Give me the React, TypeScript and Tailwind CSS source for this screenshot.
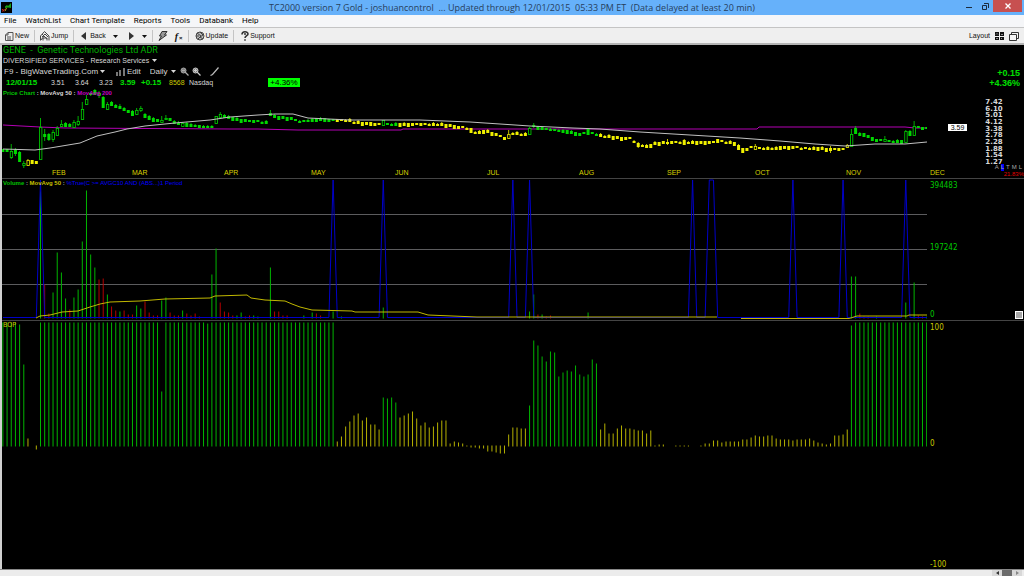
import type { ReactNode } from 'react';

const STEP = 4.18;
const barX = (i: number) => 0.88 + i * STEP;

const GREEN = '#00b400';
const YELLOW = '#b4b000';

// [high, body top, body bottom, low], 1 in fifth place for a hollow candle
type Candle = [number, number, number, number, number?];

const OPENING: Candle[] = [
  [61, 61, 63, 63], [61, 61, 63, 64], [56, 63, 69, 71, 1], [60, 62, 65, 68], [63, 64, 73, 74],
  [73, 75, 77, 82, 1], [71, 72, 77, 78, 1], [72, 72, 75, 75], [73, 73, 75, 75], [30, 39, 71, 71, 1],
  [41, 46, 48, 53], [45, 46, 51, 53], [42, 44, 51, 54, 1], [38, 40, 47, 47, 1], [32, 36, 38, 39, 1],
  [34, 35, 38, 39], [35, 36, 38, 38], [32, 34, 39, 40, 1], [28, 33, 36, 38, 1], [14, 21, 31, 31, 1],
  [7, 11, 16, 17, 1], [4, 5, 6, 8], [1, 2, 6, 7], [3, 5, 7, 10, 1], [8, 9, 19, 20],
  [14, 16, 21, 22, 1], [13, 14, 17, 17], [16, 17, 19, 20], [16, 18, 20, 21], [19, 20, 22, 23],
  [22, 22, 24, 24], [22, 23, 27, 27], [20, 22, 26, 27, 1], [18, 20, 22, 24, 1], [25, 26, 29, 29],
  [27, 28, 31, 31], [29, 30, 33, 33], [31, 31, 33, 34], [28, 32, 34, 34, 1], [27, 30, 31, 32, 1],
  [30, 30, 32, 33], [32, 33, 35, 35], [33, 35, 36, 37], [34, 35, 38, 38, 1], [34, 35, 38, 39],
  [35, 36, 38, 38], [36, 37, 38, 39], [37, 37, 39, 40], [37, 38, 39, 39], [37, 38, 39, 39],
  [37, 38, 39, 39], [28, 28, 35, 36, 1], [24, 26, 29, 29, 1], [26, 27, 29, 30],
];

// The quiet stretches follow this path, [bar, y]
const TREND: [number, number][] = [
  [54, 29], [57, 32], [60, 33], [63, 34], [65, 28], [69, 30], [71, 33], [75, 31], [80, 32], [83, 32],
  [84, 34], [90, 36], [105, 36], [108, 38], [111, 40], [113, 44], [116, 43], [118, 46], [120, 50],
  [122, 45], [125, 46], [127, 38], [129, 40], [135, 43], [138, 46], [140, 43], [142, 46], [146, 49],
  [150, 50], [152, 56], [154, 58], [156, 55], [158, 54], [170, 54], [171, 52], [175, 55], [177, 62],
  [179, 59], [183, 60], [187, 59], [195, 60], [198, 61], [201, 61], [202, 58], [205, 46], [206, 46],
  [208, 50], [209, 52], [215, 53], [219, 39], [221, 40],
];

const SPECIAL: Record<number, Candle> = {
  64: [22, 25, 27, 27], 91: [32, 32, 37, 38, 1], 112: [40, 40, 44, 45], 121: [42, 46, 50, 51, 1],
  126: [39, 40, 46, 46, 1], 127: [35, 37, 38, 40], 140: [41, 41, 46, 46], 152: [54, 55, 58, 60],
  159: [51, 54, 55, 57], 163: [51, 52, 56, 56], 171: [51, 51, 54, 54], 176: [56, 57, 61, 62],
  177: [60, 60, 64, 65], 180: [56, 58, 61, 62, 1], 198: [58, 60, 62, 65], 202: [56, 57, 59, 60, 1],
  203: [41, 46, 58, 58, 1], 204: [38, 40, 45, 46], 211: [48, 51, 53, 53, 1], 216: [42, 43, 54, 54, 1],
  217: [42, 43, 47, 47], 218: [33, 38, 47, 47, 1],
};

const SHAPES: Candle[] = [[-1, -1, 1, 1], [-2, -1, 1, 2], [-1, -1, 0, 1], [-1, -1, 2, 2], [-1, 0, 1, 2]];

function trendAt(i: number) {
  const k = TREND.findIndex(([bar]) => bar >= i);
  const [b, yb] = TREND[k];
  if (b === i) return yb;
  const [a, ya] = TREND[k - 1];
  return ya + ((yb - ya) * (i - a)) / (b - a);
}

const CANDLES: Candle[] = Array.from({ length: 222 }, (_, i) => {
  if (i < OPENING.length) return OPENING[i];
  if (SPECIAL[i]) return SPECIAL[i];
  const y = Math.round(trendAt(i));
  const s = SHAPES[(i * 7 + (i >> 2)) % SHAPES.length];
  return [y + s[0], y + s[1], y + s[2], y + s[3]];
});

const isYellow = (i: number) =>
  (i > 5 && i < 9) || (i > 79 && i < 91) || (i > 94 && i < 126) || (i > 142 && i < 203);

const MA50 =
  '1,61 33,62 48,60 78,55 95,48 113,44 125,41 143,38 173,35 208,32 228,29 256,27 273,26 291,26 306,30 348,32 418,32 468,34 498,36 528,38 571,40 598,41 638,44 688,47 738,50 778,53 813,56 843,58 873,56 903,56 925,54';
const MA200 = '1,37 38,39 63,40 228,41 256,41 296,42 399,42 401,41 755,41 757,39 903,39 913,40 925,40';

// Volume: positive bars are up days, negative bars are down days
const VOLUME: Record<number, number> = {
  9: 127, 10: -34, 11: -5, 12: 26, 13: 66, 14: 46, 15: 20, 16: -9, 17: 21, 18: 29, 19: 77, 20: 128,
  21: 64, 22: 51, 23: -39, 24: -40, 25: 24, 26: -12, 27: -8, 28: 7, 29: -8, 30: -4, 31: -4, 32: 13,
  33: 10, 34: -17, 35: -6, 36: -3, 37: -3, 38: 18, 39: 21, 40: -6, 41: -3, 42: -3, 43: 8, 44: -5,
  45: -3, 46: -5, 47: -2, 50: 44, 51: 70, 52: -16, 53: -7, 54: -6, 55: -3, 56: 3, 57: 6, 58: -2,
  59: -3, 60: 3, 61: 2, 64: 51, 65: -7, 66: -7, 67: -3, 68: -3, 72: 3, 74: 6, 75: -5, 76: -3,
  79: 7, 81: 2, 91: 11, 126: 7, 127: 24, 128: -4, 129: 4, 130: -2, 131: -3, 140: 6, 203: 42,
  204: 42, 205: -5, 206: -2, 207: -2, 209: 2, 216: 16, 218: 36, 219: -3, 220: -2, 221: 2,
};
const SIGNALS = [[9, 9], [79, 79], [91, 91], [122, 122], [126, 126], [165, 165], [169, 170], [189, 189], [201, 201], [216, 216]];
const SIGNAL_LINE =
  `1,137.5 ` +
  SIGNALS.map(([a, b]) => `${barX(a - 1)},137.5 ${barX(a)},0 ${barX(b)},0 ${barX(b + 1)},137.5`).join(' ') +
  ` 925,137.5`;
const VOLUME_MA =
  '34,138 38,136 48,135 60,132 76,131 88,127 98,124 108,122 138,121 163,119 208,118 213,116 245,115 249,118 263,120 283,121 290,124 298,127 310,130 350,131 353,132 416,132 426,135 475,137 715,137';
const VOLUME_MA_LATE = '739,138.500 847,138.500 855,136 905,136 907,135 925,135';

const full = (n: number) => Array<number>(n).fill(124);
const BOP: number[] = [
  ...full(4), 122, 82, 8, 0, -4, ...full(29), 55, ...full(10), 123, ...full(30),
  5, 10, 20, 25, 31, 33, 26, 29, 22, 22, 17, 49, 48, 49, 44, 29, 31, 33, 35, 28, 21, 24, 19, 20, 24, 26, 26,
  3, 5, 4, 3, 1, -2, -2, -3, -3, -6, -6, -7, -8, -8, 12, 19, 19, 18, 18,
  41, 106, 101, 90, 85, 95, 94, 70, 74, 76, 75, 81, 72, 70, 72, 87, 83,
  17, 23, 13, 13, 18, 21, 18, 18, 17, 16, 16, 13, 16, 1, 2, 2, 0, 0, 1, 1, 1, 1, 0, 0,
  1, 3, 3, 6, 6, 4, 5, 5, 5, 5, 7, 7, 9, 11, 10, 10, 11, 11, 8, 7, 7, 7, 6, 7, 7, 7, 8, 6, 4, 3, 2, 3,
  11, 11, 12, 17, 121, ...full(18),
];

// Each month takes the share of the width between its label and the next
const MONTHS: [string, number][] = [
  ['', 50], ['FEB', 80], ['MAR', 92], ['APR', 87], ['MAY', 84], ['JUN', 92], ['JUL', 92],
  ['AUG', 88], ['SEP', 88], ['OCT', 91], ['NOV', 84], ['DEC', 94],
];

const PRICES = ['7.42', '6.10', '5.01', '4.12', '3.38', '2.78', '2.28', '1.88', '1.54', '1.27'];

function Caret() {
  return (
    <svg viewBox="0 0 5 3" className="h-[3px] w-[5px] shrink-0" fill="currentColor">
      <path d="M0 0h5L2.500 3z" />
    </svg>
  );
}

function ToolButton({ children, label }: { children: ReactNode; label?: string }) {
  return (
    <button aria-label={label} className="flex h-full items-center gap-px whitespace-nowrap">
      {children}
    </button>
  );
}

function Divider() {
  return <div className="h-3 w-px bg-[#c4c4c4]" />;
}

function TitleBar() {
  return (
    <header className="flex h-[15px] items-start bg-[#66b1fa] text-[#26405c]">
      <svg viewBox="0 0 11 11" className="mt-[2px] ml-px h-[11px] w-[11px]">
        <rect width="11" height="11" fill="#000" />
        <path d="M1 7l2 2.500M1.500 9.500L3.500 7" stroke="#d02020" fill="none" />
        <path d="M4 6V4.500L6 3l1 1 3-3v5L7 5.500z" fill="#18a018" />
        <path d="M4 9l1.500-3" stroke="#c8a020" fill="none" />
      </svg>
      <h1 className="flex-1 pl-[51px] text-center font-['Open_Sans',sans-serif] text-[9px] leading-[15px] whitespace-pre">
        TC2000 version 7 Gold - joshuancontrol  ... Updated through 12/01/2015  05:33 PM ET  (Data delayed at least 20 min)
      </h1>
      <button aria-label="Minimize" className="flex h-3 w-4 items-center justify-center">
        <svg viewBox="0 0 6 6" className="h-[6px] w-[6px]"><path d="M0 4h6v1H0z" fill="#1b2b3d" /></svg>
      </button>
      <button aria-label="Restore" className="flex h-3 w-4 items-center justify-center">
        <svg viewBox="0 0 7 7" className="h-[7px] w-[7px]" fill="none" stroke="#1b2b3d">
          <path d="M.5 2.500h4v4h-4zM2 .5h4.500V5" />
        </svg>
      </button>
      <button aria-label="Close" className="mr-[2px] flex h-3 w-[29px] items-center justify-center bg-[#c75050]">
        <svg viewBox="0 0 6 6" className="h-[6px] w-[6px]" stroke="#fff" strokeWidth="1.300"><path d="M.5.5l5 5M5.500.5l-5 5" /></svg>
      </button>
    </header>
  );
}

function MenuBar() {
  const items = ['File', 'WatchList', 'Chart Template', 'Reports', 'Tools', 'Databank', 'Help'];
  return (
    <nav className="flex h-3 items-center gap-[9px] bg-[#f5f6f8] pl-1 font-['Roboto',sans-serif] text-[8px] leading-3 text-black">
      {items.map((item) => (
        <button key={item}>{item}</button>
      ))}
    </nav>
  );
}

function Toolbar() {
  return (
    <div className="flex h-[18px] items-center border-t border-b-2 border-[#c4c4c4] border-b-[#b4b4b4] bg-[#efefef] pt-px pr-[5px] pl-[5px] text-[7px] text-[#111]">
      <div className="flex h-full items-center gap-[5px]">
        <ToolButton>
          <svg viewBox="0 0 9 9" className="h-[9px] w-[9px]" fill="none" stroke="#555">
            <path d="M3 .5h5v8H.5V3zM3 .5V3H.5M2 5h4M2 7h4" />
          </svg>
          New
        </ToolButton>
        <Divider />
        <ToolButton>
          <svg viewBox="0 0 10 10" className="h-[10px] w-[10px]" fill="none" stroke="#444">
            <path d="M.5 9.500V5l4-4.500L9 5v4.500M2 6l3-3 3 3M3 9.500V7h4v2.500M2 3l5 5M1 9l3-4" />
          </svg>
          Jump
        </ToolButton>
        <Divider />
        <div className="flex items-center gap-[11px] pl-[2px]">
          <ToolButton>
            <svg viewBox="0 0 5 8" className="mr-[3px] h-2 w-[5px]" fill="#333"><path d="M5 0v8L0 4z" /></svg>
            <span className="pr-[6px]">Back</span>
            <Caret />
          </ToolButton>
          <ToolButton label="Forward">
            <svg viewBox="0 0 5 8" className="mr-[7px] h-2 w-[5px]" fill="#333"><path d="M0 0v8l5-4z" /></svg>
            <Caret />
          </ToolButton>
        </div>
        <Divider />
        <ToolButton label="Alerts">
          <svg viewBox="0 0 10 10" className="mr-[2px] h-[10px] w-[10px]" fill="#999" stroke="#333">
            <path d="M4 .5h5L6.500 4h2L1 9.500 3.500 5h-2z" />
          </svg>
        </ToolButton>
        <ToolButton label="Formula">
          <span className="font-['Liberation_Serif',serif] text-[10px] font-bold italic">f</span>
          <span className="pt-1 text-[6px] font-bold">×</span>
        </ToolButton>
        <Divider />
        <ToolButton>
          <svg viewBox="0 0 10 10" className="ml-px h-[10px] w-[10px]" fill="#bbb" stroke="#444">
            <circle cx="5" cy="5" r="4" />
            <path d="M2 2l4 3-3 3M5 1l3 3-3 2 3 2M1 5h3" fill="none" />
          </svg>
          Update
        </ToolButton>
        <Divider />
        <ToolButton>
          <svg viewBox="0 0 8 10" className="ml-[2px] h-[10px] w-2" fill="none" stroke="#333" strokeWidth="1.600">
            <path d="M1 3.500C1 0 7 0 7 3c0 1.500-3 2-3 4M4 8.200v1.500" />
            <path d="M3 3h2" />
          </svg>
          Support
        </ToolButton>
      </div>
      <div className="ml-auto flex items-center gap-[5px]">
        <span>Layout</span>
        <button aria-label="Tile charts">
          <svg viewBox="0 0 9 8" className="h-2 w-[9px]" fill="#111">
            <path d="M0 0h4v4H0zM5 0h4v4H5zM0 5h4v3H0zM5 5h4v3H5z" />
            <path d="M1 2.500l1-1 1 1M6 2l1 1 1-1M1 6.500h2M6 7l1-1" stroke="#ddd" strokeWidth=".6" fill="none" />
          </svg>
        </button>
        <button aria-label="Cascade charts">
          <svg viewBox="0 0 10 9" className="h-[9px] w-[10px]" fill="#f4f4f4" stroke="#333">
            <path d="M2.500.5h7v6h-7z" />
            <path d="M.5 2.500h7v6h-7z" />
          </svg>
        </button>
      </div>
    </div>
  );
}

function Candles() {
  return (
    <g strokeWidth="1">
      {CANDLES.map(([hi, top, bottom, low, hollow], i) => {
        const x = barX(i);
        const color = isYellow(i) ? '#f0f000' : '#00d800';
        return (
          <g key={i} stroke={color}>
            <path d={`M${x} ${hi}V${top}M${x} ${bottom}V${low}`} strokeOpacity=".8" />
            {hollow ? (
              <rect x={x - 1} y={top + 0.5} width="2.400" height={bottom - top} fill="#000" strokeWidth=".8" />
            ) : (
              <rect x={x - 1.5} y={top} width="3" height={bottom - top + 1} fill={color} stroke="none" />
            )}
          </g>
        );
      })}
    </g>
  );
}

function PricePane() {
  return (
    <section className="text-[#d8d8d8]">
      <div className="flex">
        <div className="min-w-0 flex-1">
          <h2 className="h-[10px] pl-px font-['Roboto',sans-serif] text-[9px] leading-[11px] text-[#00b000]">GENE&nbsp; -&nbsp; Genetic Technologies Ltd ADR</h2>
          <div className="flex h-[11px] items-center gap-[3px] pl-px text-[7px] leading-[11px]">
            <button>DIVERSIFIED SERVICES - Research Services</button>
            <Caret />
          </div>
          <div className="flex h-[11px] items-center pl-[2px] text-[8px]">
            <select aria-label="Chart template" className="w-[96px] appearance-none leading-[11px]">
              <option>F9 - BigWaveTrading.Com</option>
            </select>
            <Caret />
            <button className="ml-[11px] flex items-center gap-[2px]">
              <svg viewBox="0 0 9 8" className="h-2 w-[9px]" fill="#777"><path d="M0 4h2v4H0zM3 2h2v6H3zM7 0h2v8H7z" /></svg>
              Edit
            </button>
            <select aria-label="Time frame" className="ml-[9px] w-[21px] appearance-none leading-[11px]">
              <option>Daily</option>
            </select>
            <Caret />
            <button aria-label="Zoom out" className="ml-1">
              <svg viewBox="0 0 9 9" className="h-[9px] w-[9px]" stroke="#aaa" fill="#777"><circle cx="3.500" cy="3.500" r="2.500" /><path d="M5 5l3.500 3.500M2 3.500h3" strokeWidth="1.300" /></svg>
            </button>
            <button aria-label="Zoom in" className="ml-[3px]">
              <svg viewBox="0 0 9 9" className="h-[9px] w-[9px]" stroke="#ccc" fill="#777"><circle cx="3.500" cy="3.500" r="2.500" /><path d="M5 5l3.500 3.500M2 3.500h3M3.500 2v3" strokeWidth="1.200" /></svg>
            </button>
            <button aria-label="Draw line" className="ml-[9px]">
              <svg viewBox="0 0 9 9" className="h-[9px] w-[9px]" stroke="#bbb" fill="none"><path d="M.5 8.500l2-1 6-7" strokeWidth="1.200" /></svg>
            </button>
          </div>
          <div className="flex h-[11px] items-center pl-1 text-[7px] leading-[11px]">
            <span className="w-[45px] text-[8px] font-bold text-[#00e000]">12/01/15</span>
            <span className="w-6">3.51</span>
            <span className="w-6">3.64</span>
            <span className="w-[21px]">3.23</span>
            <span className="w-[21px] text-[8px] font-bold text-[#00e000]">3.59</span>
            <span className="w-7 text-[8px] font-bold text-[#00e000]">+0.15</span>
            <span className="w-5 text-[#c8c800]">8568</span>
            <span className="w-[79px]">Nasdaq</span>
            <span className="h-[9px] w-8 bg-[#00ff00] text-center text-[8px] leading-[9px] text-black">+4.36%</span>
          </div>
          <div className="relative">
            <svg viewBox="0 0 925 80" preserveAspectRatio="none" className="block h-20 w-full">
              <polyline points={MA200} fill="none" stroke="#b400b4" />
              <Candles />
              <polyline points={MA50} fill="none" stroke="#c0c0c0" />
            </svg>
            <p className="absolute top-0 left-px text-[6px] leading-[10px] font-bold whitespace-pre">
              <span className="text-[#00c000]">Price Chart</span> : MovAvg 50 : <span className="text-[#c000c0]">MovAvg 200</span>
            </p>
          </div>
        </div>
        <div className="flex w-[97px] flex-col">
          <div className="flex h-[43px] flex-col items-end justify-end pr-1 text-[9px] leading-[10px] font-bold text-[#00e000]">
            <span>+0.15</span>
            <span>+4.36%</span>
          </div>
          <div className="flex items-start">
            <span className="mt-9 ml-[21px] h-[7px] w-[19px] bg-white text-center text-[7px] leading-[7px] text-black">3.59</span>
            <ol className="mt-[11px] ml-2 flex h-[66px] w-[38px] flex-col justify-between text-center font-['DejaVu_Sans',sans-serif] text-[7px] leading-[6px] font-bold">
              {PRICES.map((p) => (
                <li key={p} className="h-[6px]">{p}</li>
              ))}
            </ol>
          </div>
        </div>
      </div>
      <div className="relative flex h-[10px] text-[7px] leading-[10px] text-[#d8d000]">
        {MONTHS.map(([name, share]) => (
          <span key={name} className="basis-0" style={{ flexGrow: share }}>{name}</span>
        ))}
        <div className="absolute right-0 bottom-0 flex flex-col items-end text-[6px] leading-[7px]">
          <div className="flex gap-[2px] pr-[2px] text-[#a8a8a8]">
            <button>A</button>
            <button className="bg-[#0000ff]">L</button>
            <button>T</button>
            <button>M</button>
            <button>L</button>
          </div>
          <span className="text-[#e00000]">21.83%</span>
        </div>
      </div>
    </section>
  );
}

function VolumePane() {
  return (
    <section className="flex h-[142px] border-t border-[#444]">
      <div className="relative min-w-0 flex-1">
        <svg viewBox="0 -1 925 141" preserveAspectRatio="none" className="block h-full w-full">
          <path d="M0 34.500h925M0 69.500h925M0 104.500h925" stroke="#5c5c5e" />
          {Object.entries(VOLUME).map(([i, v]) => (
            <rect
              key={i}
              x={barX(Number(i)) - 0.5}
              y={138.5 - Math.abs(v)}
              width="1"
              height={Math.abs(v)}
              fill={v > 0 ? GREEN : '#b40000'}
            />
          ))}
          <polyline points={SIGNAL_LINE} fill="none" stroke="#0000c8" />
          <polyline points={VOLUME_MA} fill="none" stroke="#c0b800" />
          <polyline points={VOLUME_MA_LATE} fill="none" stroke="#c0b800" />
        </svg>
        <p className="absolute top-0 left-px text-[6px] leading-[9px] font-bold whitespace-pre text-[#a8a8a8]">
          <span className="text-[#00c000]">Volume</span> : <span className="text-[#c8c000]">MovAvg 50</span> :{' '}
          <span className="font-normal text-[#0000ff]">%True(C &gt;= AVGC10 AND (ABS...)1 Period</span>
        </p>
      </div>
      <div className="flex w-[97px] flex-col justify-between pt-px pl-[3px] font-['DejaVu_Sans_Condensed','Liberation_Sans',sans-serif] text-[8px] leading-[11px] text-[#00c800]">
        <span>394483</span>
        <span className="pb-[6px]">197242</span>
        <div className="flex items-center justify-between">
          <span>0</span>
          <button aria-label="Resize pane" className="mr-px h-2 w-2 border border-white bg-[#a8a8a8]" />
        </div>
      </div>
    </section>
  );
}

function BopPane() {
  return (
    <section className="flex min-h-0 flex-1 border-t border-[#444] font-['DejaVu_Sans_Condensed','Liberation_Sans',sans-serif] text-[8px] leading-[11px] text-[#c8c800]">
      <div className="relative min-h-0 min-w-0 flex-1">
        <svg viewBox="0 -1 925 248" preserveAspectRatio="none" className="block h-full w-full">
          {BOP.map((v, i) => (
            <rect
              key={i}
              x={barX(i) - 0.5}
              y={v > 0 ? 124.5 - v : 123.5}
              width="1"
              height={Math.abs(v)}
              fill={Math.abs(v) > 40 ? GREEN : YELLOW}
            />
          ))}
        </svg>
        <span className="absolute top-0 left-px text-[7px] leading-[9px]">BOP</span>
      </div>
      <div className="flex w-[97px] flex-col justify-between pt-px pl-[3px]">
        <span>100</span>
        <span className="pb-[6px]">0</span>
        <span className="leading-[9px]">-100</span>
      </div>
    </section>
  );
}

function ScrollStrip() {
  return (
    <footer className="flex h-[7px] justify-end border-t border-[#888] bg-[#ececec] pr-[2px]">
      <button aria-label="Scroll left" className="flex w-[10px] items-center justify-center bg-[#d8d8d8]">
        <svg viewBox="0 0 3 4" className="h-1 w-[3px]" fill="#333"><path d="M3 0v4L0 2z" /></svg>
      </button>
      <div className="w-[10px] bg-[#6c6c6c]" />
      <button aria-label="Scroll right" className="flex w-[10px] items-center justify-center bg-[#d8d8d8]">
        <svg viewBox="0 0 3 4" className="h-1 w-[3px]" fill="#888"><path d="M0 0v4l3-2z" /></svg>
      </button>
    </footer>
  );
}

export default function App() {
  return (
    <div className="flex h-screen flex-col overflow-hidden bg-black font-['Liberation_Sans',sans-serif]">
      <TitleBar />
      <MenuBar />
      <Toolbar />
      <main className="flex min-h-0 flex-1 flex-col border-l-2 border-[#d0d0d0]">
        <PricePane />
        <VolumePane />
        <BopPane />
      </main>
      <ScrollStrip />
    </div>
  );
}
